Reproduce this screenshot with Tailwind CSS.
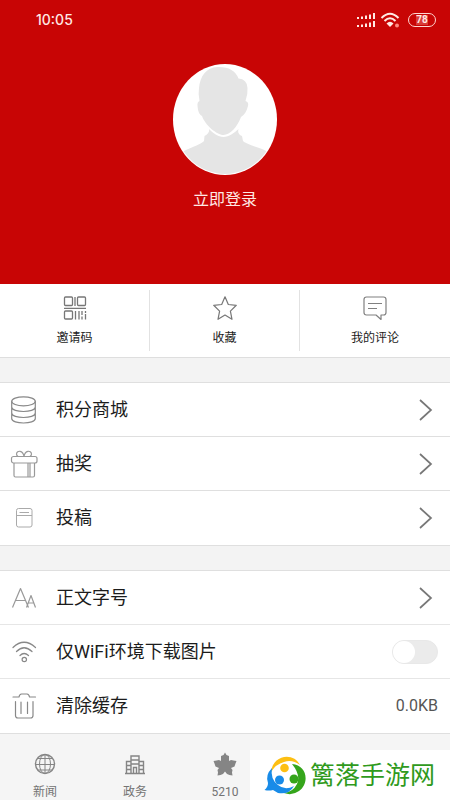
<!DOCTYPE html>
<html lang="zh-CN">
<head>
<meta charset="utf-8">
<meta name="viewport" content="width=device-width, initial-scale=1">
<title>个人中心</title>
<script src="https://cdn.jsdelivr.net/npm/@tailwindcss/browser@4"></script>
</head>
<body class="flex min-h-screen flex-col bg-[#f3f3f3] font-['Roboto','Noto_Sans_CJK_SC',sans-serif] text-[#1c1c1c]">
<header class="bg-[#c80505] pb-18 text-[#ffe9e4]">
  <div class="flex h-10 items-center justify-between pr-3.5 pl-9">
    <time class="font-['Inter',sans-serif] text-sm font-medium">10:05</time>
    <div class="flex items-center gap-1">
      <svg class="h-4 w-5" viewBox="0 0 20 16" fill="none" stroke="currentColor" stroke-width="2"><path d="M2 7V5M6 7V4.500M10 7V3.500M14 7V2.500M18 7V1M2 15V13M6 15V12.500M10 15V11.500M14 15V10.500M18 15V9"/></svg>
      <svg class="h-4 w-5" viewBox="0 0 20 16" fill="none" stroke="currentColor" stroke-width="2"><path d="M1.500 6Q10-2.500 18.500 6M4.500 9Q10 3.500 15.500 9"/><path d="M6.500 11.500Q10 8 13.500 11.500L10 15Z" fill="currentColor" stroke="none"/><circle cx="17" cy="13.500" r="2" fill="#ff8a80" stroke="none"/></svg>
      <span class="ml-1 flex h-3.5 w-7 items-center justify-center rounded-full border border-[#ffd5cf] text-[10px] leading-none font-bold"><span class="bg-[#d83c37]">78</span></span>
    </div>
  </div>
  <button type="button" class="mx-auto mt-6 flex flex-col items-center">
    <svg class="h-[111px] w-[104px]" viewBox="0 0 104 111" aria-hidden="true">
      <defs><clipPath id="face"><ellipse cx="52" cy="55.500" rx="51" ry="54.500"/></clipPath></defs>
      <ellipse cx="52" cy="55.500" rx="52" ry="55.500" fill="#fff"/>
      <g clip-path="url(#face)" fill="#e5e5e5">
        <path d="M36 65Q37 69 31.500 72L31 77Q30 79 13 86L0 92V111H104V92L89 85Q71 79 70 77L69 72Q64 70 65.500 65C61 69 56 73 50.500 73C45 73 40 69 36 65Z"/>
        <path d="M46 3C34 2 27 12 26 24Q25 30 26.500 37Q24 38 24.500 42Q25 50 29 52C32 61 44 71 50.500 71C57 71 65 62 68 53Q73 50 75 42Q76 38 72.500 37Q75 30 74.500 24Q74 15 65.500 14.500Q61 3 46 3Z"/>
      </g>
    </svg>
    <span class="mt-3 text-base leading-[25px]">立即登录</span>
  </button>
</header>

<nav aria-label="快捷入口" class="grid grid-cols-3 border-b border-[#dedede] bg-white py-1.5 text-xs">
  <a href="#invite" class="flex h-[61px] flex-col items-center gap-2 border-r border-[#e2e2e2] pt-1.5">
    <svg class="size-6" viewBox="0 0 24 24" fill="none" stroke="#777" stroke-width="1.300"><rect x="1.500" y="1" width="8" height="8.500" rx="1"/><rect x="14.500" y="1" width="8" height="8.500" rx="1"/><rect x="1.500" y="15" width="8" height="8" rx="1"/><path d="M12 1v9M1 12.300h22M12.500 15v8.500M16 15v8.500M19 15v4M19 20.500v3M22.500 15v2M22.500 18v5.500"/></svg>
    <span class="leading-5">邀请码</span>
  </a>
  <a href="#favorites" class="flex h-[61px] flex-col items-center gap-2 border-r border-[#e2e2e2] pt-1.5">
    <svg class="size-6" viewBox="0 0 24 24" fill="none" stroke="#777" stroke-width="1.200" stroke-linejoin="round"><path d="M12 .8L15.300 8.500L23.300 9.300L17.400 15.100L19 23.300L12 19L5 23.300L6.600 15.100L.7 9.300L8.700 8.500Z"/></svg>
    <span class="leading-5">收藏</span>
  </a>
  <a href="#comments" class="flex h-[61px] flex-col items-center gap-2 pt-1.5">
    <svg class="size-6" viewBox="0 0 24 24" fill="none" stroke="#808080" stroke-width="1.200" stroke-linejoin="round"><path d="M3.500 1H20.500Q23 1 23 3.500V16.500Q23 19 20.500 19H18V23.500L13 19H3.500Q1 19 1 16.500V3.500Q1 1 3.500 1ZM5 7.500H19M5 12.500H14"/></svg>
    <span class="leading-5">我的评论</span>
  </a>
</nav>

<main class="flex flex-1 flex-col">
  <ul class="mt-6 divide-y divide-[#dfdfdf] border-y border-[#dfdfdf] bg-white text-lg">
    <li><a href="#mall" class="flex h-[53px] items-center pr-4 pl-3">
      <svg class="size-7 shrink-0 -ml-0.5" viewBox="0 0 28 28" fill="none" stroke="#888" stroke-width="1.200"><ellipse cx="13.500" cy="5.300" rx="11.800" ry="4.500"/><path d="M1.700 5.300V22.500C1.700 28.500 25.300 28.500 25.300 22.500V5.300M1.700 11C1.700 17 25.300 17 25.300 11M1.700 17C1.700 23 25.300 23 25.300 17"/></svg>
      <span class="ml-4.5 flex-1">积分商城</span>
      <svg class="h-6 w-4 shrink-0" viewBox="0 0 16 24" fill="none" stroke="#777" stroke-width="1.700"><path d="M2 2L13 12L2 22"/></svg>
    </a></li>
    <li><a href="#lottery" class="flex h-[53px] items-center pr-4 pl-3">
      <svg class="size-7 shrink-0 -ml-0.5" viewBox="0 0 28 28" fill="none" stroke="#999" stroke-width="1.200"><rect x="1.500" y="6.500" width="25.500" height="6.500" rx="2"/><path d="M4 13V25.500Q4 27 5.500 27H23Q24.500 27 24.500 25.500V13M18 13V27M20 13V27M14 6.500C13 0 7 0 6.500 4Q6.500 5.500 8 6.500M14 6.500C15 0 21 0 21.500 4Q21.500 5.500 20 6.500"/></svg>
      <span class="ml-4.5 flex-1">抽奖</span>
      <svg class="h-6 w-4 shrink-0" viewBox="0 0 16 24" fill="none" stroke="#777" stroke-width="1.700"><path d="M2 2L13 12L2 22"/></svg>
    </a></li>
    <li><a href="#submit" class="flex h-[54px] items-center pr-4 pl-3">
      <svg class="size-7 shrink-0 -ml-0.5" viewBox="0 0 28 28" fill="none" stroke="#aaa" stroke-width="1"><rect x="6.500" y="4.500" width="15.500" height="18.500" rx="2"/><path d="M6.500 11.500H22M9.500 8.500H19" /></svg>
      <span class="ml-4.5 flex-1">投稿</span>
      <svg class="h-6 w-4 shrink-0" viewBox="0 0 16 24" fill="none" stroke="#777" stroke-width="1.700"><path d="M2 2L13 12L2 22"/></svg>
    </a></li>
  </ul>

  <ul class="mt-6 divide-y divide-[#e6e6e6] border-y border-[#dfdfdf] bg-white text-lg">
    <li><a href="#font-size" class="flex h-[53px] items-center pr-4 pl-3">
      <svg class="size-7 shrink-0 -ml-0.5" viewBox="0 0 28 28" fill="none" stroke="#999" stroke-width="1.200" stroke-linejoin="round"><path d="M2.500 23.500L10.500 4.500L18.500 23.500M5.500 16.500H15.500M16.500 23.500L21 11.500L25.500 23.500M18 19H24"/></svg>
      <span class="ml-4.5 flex-1">正文字号</span>
      <svg class="h-6 w-4 shrink-0" viewBox="0 0 16 24" fill="none" stroke="#777" stroke-width="1.700"><path d="M2 2L13 12L2 22"/></svg>
    </a></li>
    <li class="flex h-[54px] items-center pr-3 pl-3">
      <svg class="size-7 shrink-0 -ml-0.5" viewBox="0 0 28 28" fill="none" stroke="#888" stroke-width="1.200" stroke-linecap="round"><path d="M3 9.500Q14-1 25.500 9.500M6.500 13.500Q14 6 22 13.500M10 17.500Q14 13.500 18.500 17.500"/><circle cx="14.300" cy="21.500" r="2.200"/></svg>
      <label for="wifi-only" class="ml-4.5 flex-1">仅WiFi环境下载图片</label>
      <input id="wifi-only" type="checkbox" role="switch" class="h-6 w-[46px] shrink-0 appearance-none rounded-full border border-[#e8e8e8] bg-[#ebebeb] before:block before:size-[22px] before:rounded-full before:bg-white checked:bg-[#c80505] checked:before:ml-[22px]">
    </li>
    <li><button type="button" class="flex h-[54px] w-full items-center pr-3 pl-3 text-left">
      <svg class="size-7 shrink-0 -ml-0.5" viewBox="0 0 28 28" fill="none" stroke="#888" stroke-width="1.200" stroke-linecap="round" stroke-linejoin="round"><path d="M3 5H9Q9.500 2 11.500 2H17Q19 2 19.500 5H25.500M5.500 9.500V23.500Q5.500 26 8 26H20.500Q23 26 23 23.500V9.500M11 10V21.500M17.500 10V21.500"/></svg>
      <span class="ml-4.5 flex-1">清除缓存</span>
      <span class="text-base text-[#555]">0.0KB</span>
    </button></li>
  </ul>

  <nav aria-label="主导航" class="grid flex-1 grid-cols-5 bg-[#f5f5f5] pt-4.5 text-xs text-[#737373]">
    <a href="#news" class="flex flex-col items-center gap-2">
      <svg class="size-6" viewBox="0 0 24 24" fill="none" stroke="#858585" stroke-width="1"><circle cx="12" cy="12" r="9.500" stroke-width="1.400"/><ellipse cx="12" cy="12" rx="5.500" ry="9.500"/><path d="M12 2.500V21.500M2.500 12.500H21.500M4.500 6.500H19.500M4.500 18H19.500"/></svg>
      <span class="leading-4">新闻</span>
    </a>
    <a href="#affairs" class="flex flex-col items-center gap-2">
      <svg class="size-6" viewBox="0 0 24 24" fill="none" stroke="#858585" stroke-width="1.400"><path d="M2 21.500H22M3.500 21.500V9.500H8M8 21.500V4H16V21.500M16 9.500H20.500V21.500M8 8H16M8 12H16M3.500 13.500H8M3.500 17.500H8M16 13.500H20.500M16 17.500H20.500M10.500 21V15.500H13.500V21"/></svg>
      <span class="leading-4">政务</span>
    </a>
    <a href="#5210" class="flex flex-col items-center gap-2">
      <svg class="size-6" viewBox="0 0 24 24" fill="#858585"><path d="M12 .5L13.500 3L16 4L16 9L18 8L20.500 8.500L23.500 9L22.500 11.500L21.500 14.500L18 16L19.500 18L19 20.500L19.500 23.500L16.500 23L14 22L12 19.500L10 22L7.500 23L4.500 23.500L5 20.500L4.500 18L6 16L2.500 14.500L1.500 11.500L.5 9L3.500 8.500L6 8L8 9L8 4L10.500 3Z"/></svg>
      <span class="leading-4">5210</span>
    </a>
  </nav>
</main>

<aside class="fixed right-0 bottom-0 flex h-[50px] w-[200px] items-center bg-white pl-3.5 text-[#2f9a1c]">
  <svg class="mr-1 h-10 w-[42px] shrink-0" viewBox="0 0 42 40">
    <path d="M7 17C9-1 30-3 36 10Q28 4 20 7Q12 9 7 17Z" fill="#fdbf12"/>
    <path d="M28 9C43 10 46 28 35 36Q28 41 20 38Q29 37 33 29Q37 20 28 9Z" fill="#35a51b"/>
    <path d="M8 13Q6 24 14 30Q21 36 30 31Q25 40 14 38L9 35Q5 36 .5 35Q4 32 4 28Q1 20 8 13Z" fill="#188be8"/>
    <circle cx="20.500" cy="13" r="4.300" fill="#fdbf12"/><circle cx="15.500" cy="25" r="4.500" fill="#188be8"/><circle cx="30" cy="24" r="4.500" fill="#35a51b"/>
  </svg>
  <span class="text-[25px] leading-none whitespace-nowrap">篱落手游网</span>
</aside>
</body>
</html>
